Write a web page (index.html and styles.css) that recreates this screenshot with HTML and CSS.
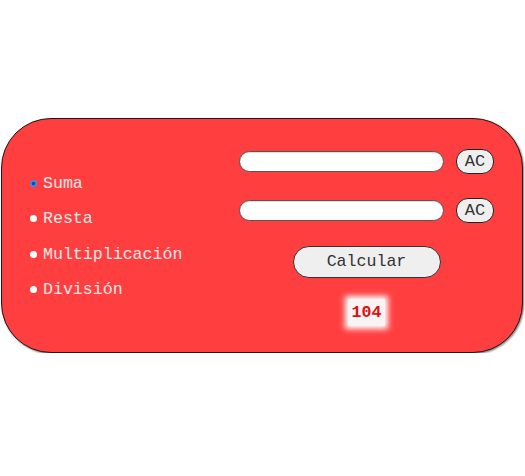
FILE: index.html
```html
<!DOCTYPE html>
<html lang="es">
<head>
    <meta charset="UTF-8">
    <title>Calculadora</title>
    <link rel="stylesheet" href="styles.css">
</head>
<body>
  <main class="calc">
    <div class="ops">
      <label class="op"><input type="radio" name="op" value="suma" checked> Suma</label>
      <label class="op"><input type="radio" name="op" value="resta"> Resta</label>
      <label class="op"><input type="radio" name="op" value="mult"> Multiplicación</label>
      <label class="op"><input type="radio" name="op" value="div"> División</label>
    </div>

    <div class="panel">
      <div class="field">
        <input type="text" class="num" id="num1">
        <button class="ac" data-target="num1">AC</button>
      </div>
      <div class="field">
        <input type="text" class="num" id="num2">
        <button class="ac" data-target="num2">AC</button>
      </div>
      <button class="calcular" id="calcular">Calcular</button>
      <span class="result" id="result">104</span>
    </div>
  </main>
</body>
</html>
```

FILE: styles.css
```css
body {
  margin: 0;
  padding: 118px 2px 0 1px;
  font-family: "Liberation Mono", "Courier New", monospace;
}

/* Main red box */
.calc {
  box-sizing: border-box;
  height: 235px;
  display: flex;
  justify-content: space-between;
  align-items: center;
  padding: 0 28px 0 28px;
  background: #ff3e40;
  border: 1px solid #1a1a1a;
  border-radius: 50px;
  box-shadow: 1px 1px 2px rgba(0,0,0,0.5);
}

/* Radio list */
.ops {
  display: flex;
  flex-direction: column;
  gap: 16.5px;
  margin-top: 2px;
}

.op {
  display: flex;
  align-items: center;
  gap: 6px;
  color: #ffe6e6;
  font-size: 16.6px;
  line-height: 19px;
}

.op input {
  appearance: none;
  width: 7px;
  height: 7px;
  margin: 0;
  border-radius: 50%;
  background: #fff;
}

.op input:checked {
  background: radial-gradient(circle, #0d4fae 0 1.6px, #3d8cec 2.2px);
}

/* Inputs and buttons */
.panel {
  display: flex;
  flex-direction: column;
  align-items: center;
  width: 255px;
  margin-top: 3px;
}

.field {
  display: flex;
  align-items: center;
  gap: 12px;
  margin-bottom: 24px;
}

.num {
  box-sizing: border-box;
  width: 205px;
  height: 21px;
  border: 1px solid #555;
  border-radius: 11px;
  background: #fff;
  box-shadow: inset 0 1px 1px rgba(0,0,0,0.15);
}

.ac {
  box-sizing: border-box;
  width: 38px;
  height: 25px;
  padding: 0;
  font-family: inherit;
  font-size: 17px;
  color: #333;
  background: #efefef;
  border: 1px solid #222;
  border-radius: 12px;
}

.field + .field {
  margin-bottom: 23px;
}

.calcular {
  box-sizing: border-box;
  width: 148px;
  height: 32px;
  font-family: inherit;
  font-size: 16.6px;
  color: #333;
  background: #efefef;
  border: 1px solid #333;
  border-radius: 16px;
  margin-bottom: 21px;
}

.result {
  padding: 4px 4px;
  font-size: 16.6px;
  font-weight: bold;
  line-height: 19px;
  color: #e01010;
  background: #f8f4f4;
  box-shadow: 0 0 6px 3px #fff;
}
```
